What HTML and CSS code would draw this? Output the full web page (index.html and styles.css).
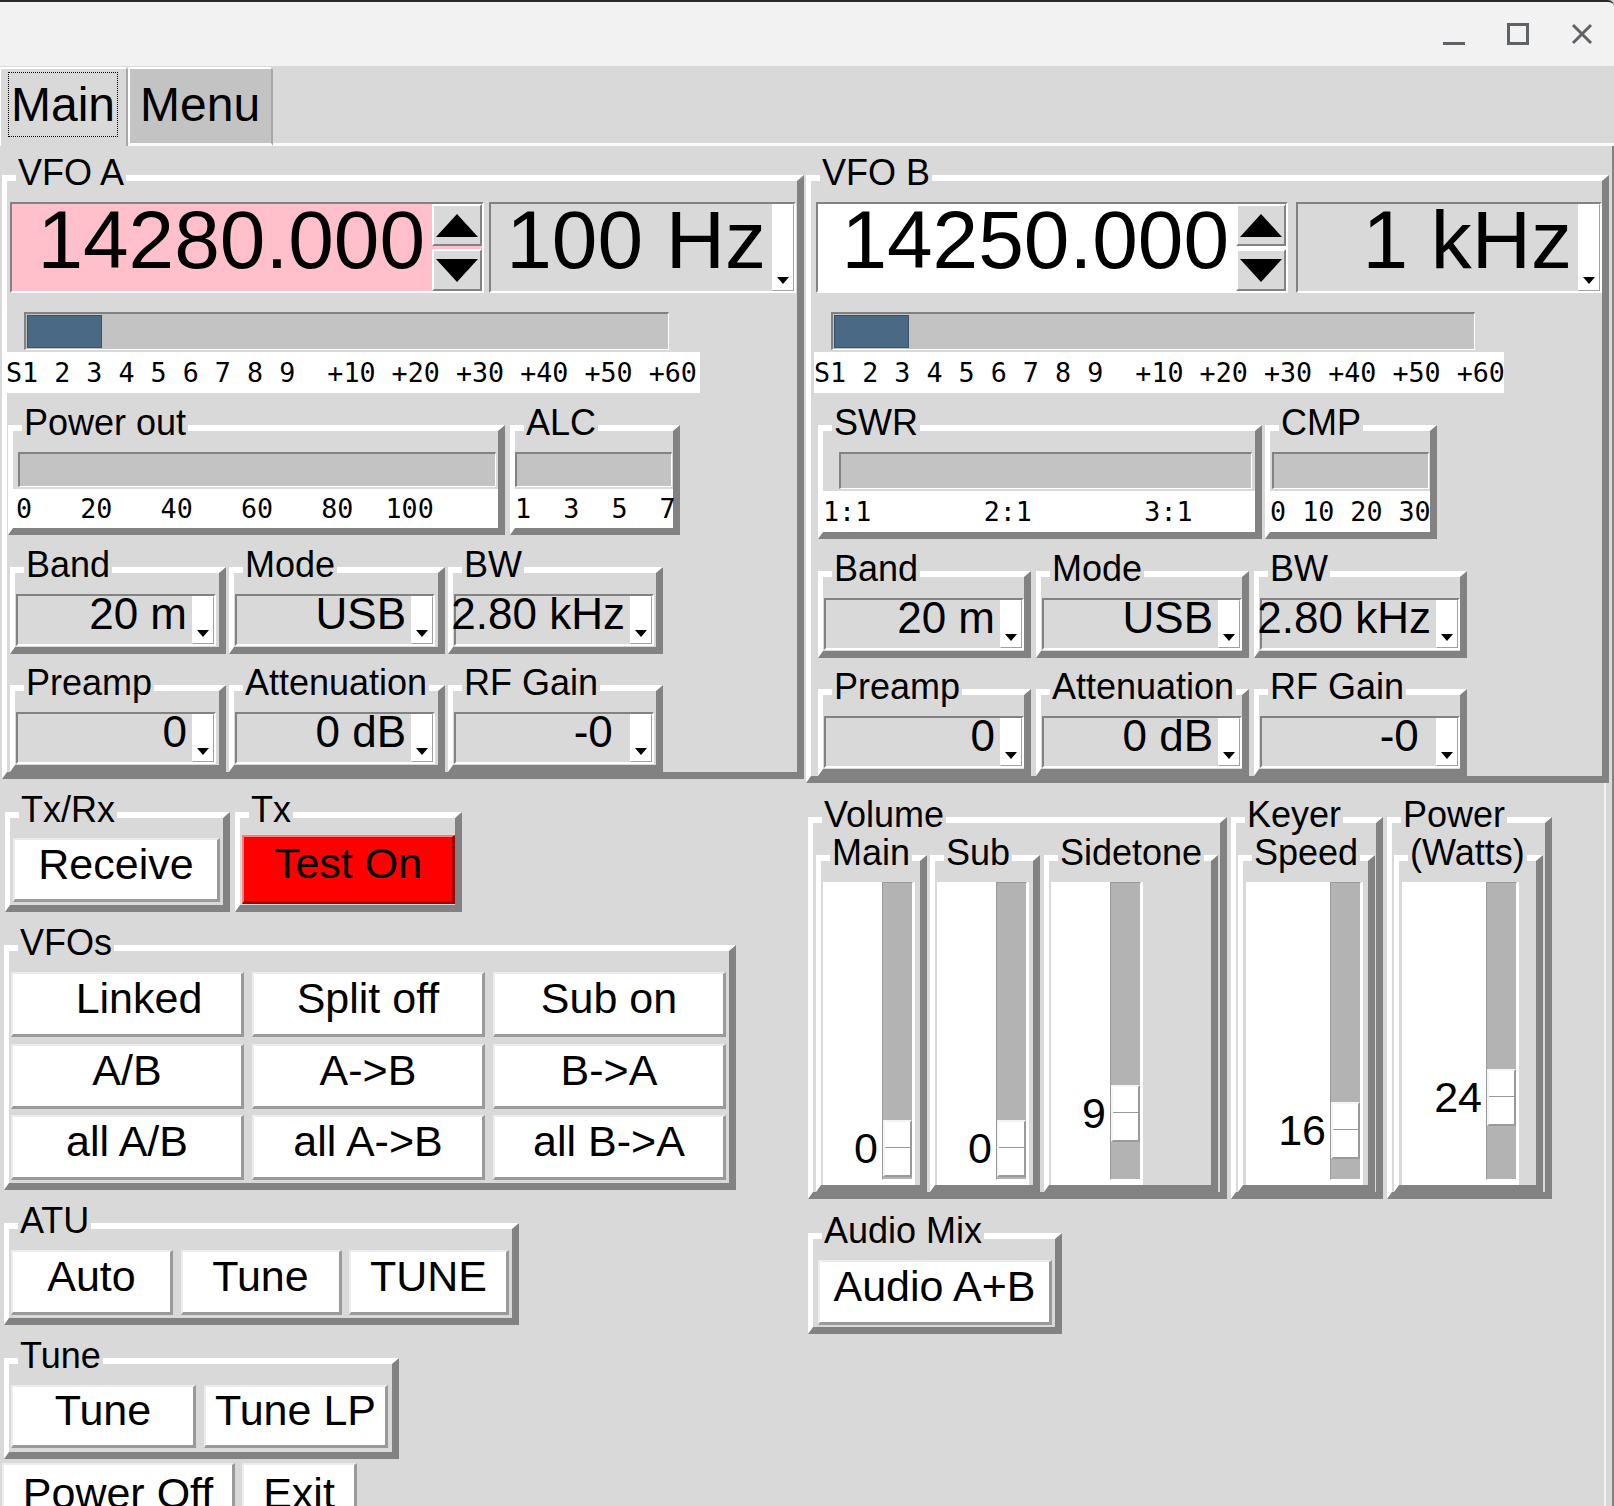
FILE: index.html
```html
<!DOCTYPE html>
<html lang="en">
<head>
<meta charset="utf-8">
<title>Rig Control</title>
<link rel="stylesheet" href="styles.css">
</head>
<body>
<div class="win">
  <header class="titlebar">
    <svg class="wm" width="22" height="22" viewBox="0 0 22 22"><rect x="0" y="19" width="22" height="3" fill="#5f6368"/></svg>
    <svg class="wm" width="22" height="22" viewBox="0 0 22 22"><rect x="1.5" y="1.5" width="19" height="19" fill="none" stroke="#5f6368" stroke-width="3"/></svg>
    <svg class="wm" width="22" height="22" viewBox="0 0 22 22"><path d="M2 2L20 20M20 2L2 20" stroke="#5f6368" stroke-width="3" fill="none"/></svg>
  </header>

  <nav class="tabs">
    <div class="tab tab-main"><span class="focus">Main</span></div>
    <div class="tab tab-menu">Menu</div>
    <div class="tab-fill"></div>
  </nav>

  <main class="pane">
    <!-- VFO A -->
    <fieldset class="lf vfo vfo-a">
      <legend>VFO A</legend>
      <div class="freqrow">
        <div class="spin spin-a"><span class="spin-val">14280.000</span><span class="spin-btns"><span class="sb sb-up"></span><span class="sb sb-dn"></span></span></div>
        <div class="combo combo-big combo-a"><span class="cval">100 Hz</span><span class="cbtn"></span></div>
      </div>
      <div class="smeter smeter-a"><div class="fill" style="width:75px"></div></div>
      <div class="ticks ticks-s ticks-sa">S1 2 3 4 5 6 7 8 9  +10 +20 +30 +40 +50 +60</div>
      <div class="mrow mrow-a">
        <fieldset class="lf lf-pwr"><legend>Power out</legend><div class="bar bar-pwr"></div><div class="ticks tk-m tk-pwr">0   20   40   60   80  100</div></fieldset>
        <fieldset class="lf lf-alc"><legend>ALC</legend><div class="bar bar-alc"></div><div class="ticks tk-m">1  3  5  7</div></fieldset>
      </div>
      <div class="crow crow-a">
        <fieldset class="lf lf-c"><legend>Band</legend><div class="combo"><span class="cval">20 m</span><span class="cbtn"></span></div></fieldset>
        <fieldset class="lf lf-c"><legend>Mode</legend><div class="combo"><span class="cval">USB</span><span class="cbtn"></span></div></fieldset>
        <fieldset class="lf lf-c"><legend>BW</legend><div class="combo"><span class="cval">2.80 kHz</span><span class="cbtn"></span></div></fieldset>
      </div>
      <div class="crow crow-a">
        <fieldset class="lf lf-c"><legend>Preamp</legend><div class="combo"><span class="cval">0</span><span class="cbtn"></span></div></fieldset>
        <fieldset class="lf lf-c"><legend>Attenuation</legend><div class="combo"><span class="cval">0 dB</span><span class="cbtn"></span></div></fieldset>
        <fieldset class="lf lf-c"><legend>RF Gain</legend><div class="combo"><span class="cval">-0 </span><span class="cbtn"></span></div></fieldset>
      </div>
    </fieldset>

    <!-- VFO B -->
    <fieldset class="lf vfo vfo-b">
      <legend>VFO B</legend>
      <div class="freqrow">
        <div class="spin spin-b"><span class="spin-val">14250.000</span><span class="spin-btns"><span class="sb sb-up"></span><span class="sb sb-dn"></span></span></div>
        <div class="combo combo-big combo-b"><span class="cval">1 kHz</span><span class="cbtn"></span></div>
      </div>
      <div class="smeter smeter-b"><div class="fill" style="width:75px"></div></div>
      <div class="ticks ticks-s ticks-sb">S1 2 3 4 5 6 7 8 9  +10 +20 +30 +40 +50 +60</div>
      <div class="mrow mrow-b">
        <fieldset class="lf lf-swr"><legend>SWR</legend><div class="bar bar-swr"></div><div class="ticks tk-mb">1:1       2:1       3:1</div></fieldset>
        <fieldset class="lf lf-cmp"><legend>CMP</legend><div class="bar bar-cmp"></div><div class="ticks tk-mb">0 10 20 30</div></fieldset>
      </div>
      <div class="crow crow-b">
        <fieldset class="lf lf-c"><legend>Band</legend><div class="combo"><span class="cval">20 m</span><span class="cbtn"></span></div></fieldset>
        <fieldset class="lf lf-c"><legend>Mode</legend><div class="combo"><span class="cval">USB</span><span class="cbtn"></span></div></fieldset>
        <fieldset class="lf lf-c"><legend>BW</legend><div class="combo"><span class="cval">2.80 kHz</span><span class="cbtn"></span></div></fieldset>
      </div>
      <div class="crow crow-b">
        <fieldset class="lf lf-c"><legend>Preamp</legend><div class="combo"><span class="cval">0</span><span class="cbtn"></span></div></fieldset>
        <fieldset class="lf lf-c"><legend>Attenuation</legend><div class="combo"><span class="cval">0 dB</span><span class="cbtn"></span></div></fieldset>
        <fieldset class="lf lf-c"><legend>RF Gain</legend><div class="combo"><span class="cval">-0 </span><span class="cbtn"></span></div></fieldset>
      </div>
    </fieldset>

    <!-- Lower left -->
    <section class="lower-left">
      <div class="txrow">
        <fieldset class="lf lf-txrx"><legend>Tx/Rx</legend><div class="btn btn-recv">Receive</div></fieldset>
        <fieldset class="lf lf-tx"><legend>Tx</legend><div class="btn btn-test">Test On</div></fieldset>
      </div>
      <fieldset class="lf lf-vfos"><legend>VFOs</legend>
        <div class="grid3">
          <div class="btn btn-linked">Linked</div>
          <div class="btn">Split off</div>
          <div class="btn">Sub on</div>
          <div class="btn">A/B</div>
          <div class="btn">A-&gt;B</div>
          <div class="btn">B-&gt;A</div>
          <div class="btn">all A/B</div>
          <div class="btn">all A-&gt;B</div>
          <div class="btn">all B-&gt;A</div>
        </div>
      </fieldset>
      <fieldset class="lf lf-atu"><legend>ATU</legend>
        <div class="grid-atu">
          <div class="btn">Auto</div>
          <div class="btn">Tune</div>
          <div class="btn">TUNE</div>
        </div>
      </fieldset>
      <fieldset class="lf lf-tune"><legend>Tune</legend>
        <div class="grid-tune">
          <div class="btn">Tune</div>
          <div class="btn">Tune LP</div>
        </div>
      </fieldset>
      <div class="botrow">
        <div class="btn btn-power">Power Off</div>
        <div class="btn btn-exit">Exit</div>
      </div>
    </section>

    <!-- Lower right -->
    <section class="lower-right">
      <div class="slrow">
        <fieldset class="lf lf-vol"><legend>Volume</legend>
          <div class="subrow">
            <fieldset class="lf lf-main"><legend>Main</legend>
              <div class="scale" style="--pos:237px"><span class="sval">0</span><span class="strough"><span class="thumb"></span></span></div>
            </fieldset>
            <fieldset class="lf lf-sub"><legend>Sub</legend>
              <div class="scale" style="--pos:237px"><span class="sval">0</span><span class="strough"><span class="thumb"></span></span></div>
            </fieldset>
            <fieldset class="lf lf-side"><legend>Sidetone</legend>
              <div class="scale" style="--pos:202px"><span class="sval">9</span><span class="strough"><span class="thumb"></span></span></div>
            </fieldset>
          </div>
        </fieldset>
        <fieldset class="lf lf-key"><legend>Keyer</legend>
          <fieldset class="lf lf-speed"><legend>Speed</legend>
            <div class="scale scale-w" style="--pos:219px"><span class="sval">16</span><span class="strough"><span class="thumb"></span></span></div>
          </fieldset>
        </fieldset>
        <fieldset class="lf lf-pw"><legend>Power</legend>
          <fieldset class="lf lf-watts"><legend>(Watts)</legend>
            <div class="scale scale-w" style="--pos:186px"><span class="sval">24</span><span class="strough"><span class="thumb"></span></span></div>
          </fieldset>
        </fieldset>
      </div>
      <fieldset class="lf lf-mix"><legend>Audio Mix</legend>
        <div class="btn btn-mix">Audio A+B</div>
      </fieldset>
    </section>
  </main>
</div>
</body>
</html>
```
FILE: styles.css
```css
* { box-sizing: border-box; }
html, body { margin: 0; padding: 0; }
body {
  width: 1614px;
  height: 1506px;
  overflow: hidden;
  background: #d9d9d9;
  font-family: "Liberation Sans", Arial, Helvetica, sans-serif;
  color: #000;
}

/* ---------- window title bar ---------- */
.titlebar {
  height: 66px;
  background: #f2f2f2;
  border-top: 2px solid #2b2b2b;
  border-top-right-radius: 6px;
  display: flex;
  justify-content: flex-end;
  align-items: center;
  gap: 42px;
  padding-right: 21px;
}
.wm { display: block; }

/* ---------- notebook tabs ---------- */
.tabs { display: flex; align-items: flex-end; height: 80px; }
.tab { font-size: 48px; line-height: 46px; white-space: nowrap; }
.tab-main {
  width: 128px;
  height: 79px;
  background: #d9d9d9;
  border-style: solid;
  border-width: 2px 2px 0 1px;
  border-color: #fff #a8a8a8 #fff #fff;
  border-top-right-radius: 4px;
  padding: 3px 0 0 7px;
}
.focus {
  display: block;
  width: 110px;
  height: 65px;
  border: 1px dotted #000;
  padding: 9px 0 0 2px;
}
.tab-menu {
  width: 145px;
  height: 79px;
  background: #c3c3c3;
  border-style: solid;
  border-width: 2px 2px 3px 2px;
  border-color: #fff #a8a8a8 #fafafa #fff;
  border-top-right-radius: 4px;
  padding: 13px 0 0 10px;
}
.tab-fill { flex: 1; border-bottom: 3px solid #fafafa; }

/* ---------- main pane ---------- */
.pane {
  display: grid;
  grid-template-columns: 802px 803px;
  column-gap: 2px;
  align-items: start;
  padding-left: 2px;
  height: 1360px;
  border-right: 2px solid #828282;
  width: 1614px;
}

/* Tk-style raised label frame */
.lf {
  margin: 0;
  padding: 0;
  min-width: 0;
  border-style: solid;
  border-width: 6px 7px 7px 5px;
  border-color: #fff #828282 #828282 #fff;
}
.lf > legend {
  font-size: 36px;
  line-height: 38px;
  padding: 0 2px 10px;
  margin-left: 9px;
  white-space: nowrap;
}

.vfo { margin-top: 8px; }
.vfo-a { width: 802px; }
.vfo-b { width: 803px; }

/* frequency row */
.freqrow { display: flex; height: 91px; }
.spin {
  display: flex;
  border: 2px solid;
  border-color: #828282 #fff #fff #828282;
}
.spin-a { margin-left: 3px; width: 474px; background: #ffc0cb; }
.spin-b { margin-left: 5px; width: 472px; background: #fff; }
.spin-val {
  flex: 1;
  display: flex;
  justify-content: flex-end;
  font-size: 82px;
  line-height: 72px;
  padding-right: 7px;
  white-space: nowrap;
}
.spin-btns {
  width: 50px;
  display: flex;
  flex-direction: column;
  gap: 3px;
}
.sb {
  flex: 1;
  background: #d9d9d9;
  border: 2px solid;
  border-color: #fff #828282 #828282 #fff;
  display: flex;
  align-items: center;
  justify-content: center;
}
.sb-up::after {
  content: "";
  border-left: 21px solid transparent;
  border-right: 21px solid transparent;
  border-bottom: 23px solid #000;
}
.sb-dn::after {
  content: "";
  border-left: 21px solid transparent;
  border-right: 21px solid transparent;
  border-top: 23px solid #000;
}

/* combobox */
.combo {
  display: flex;
  height: 52px;
  border: 2px solid;
  border-color: #828282 #fff #fff #828282;
  background: #d9d9d9;
}
.combo-big { height: 91px; }
.combo-a { margin-left: 5px; width: 307px; }
.combo-b { margin-left: 8px; width: 306px; }
.cval {
  flex: 1;
  min-width: 0;
  display: flex;
  justify-content: flex-end;
  font-size: 44px;
  line-height: 36px;
  padding-right: 5px;
  white-space: pre;
}
.combo-big .cval { font-size: 82px; line-height: 72px; padding-right: 6px; }
.cbtn {
  flex: none;
  width: 22px;
  background: #fff;
  border: 1px solid;
  border-color: #fff #a0a0a0 #a0a0a0 #fff;
  display: flex;
  align-items: flex-end;
  justify-content: center;
  padding-bottom: 6px;
}
.cbtn::after {
  content: "";
  border-left: 6px solid transparent;
  border-right: 6px solid transparent;
  border-top: 7px solid #000;
}

/* S meter */
.smeter {
  height: 38px;
  margin-top: 19px;
  background: #c3c3c3;
  border-style: solid;
  border-width: 2px 1px 1px 2px;
  border-color: #828282 #fff #fff #828282;
  padding: 1px;
}
.smeter-a { margin-left: 17px; width: 645px; }
.smeter-b { margin-left: 20px; width: 644px; }
.fill { height: 100%; background: #4a6984; border: 1px solid #38536b; }

.ticks {
  background: #fff;
  font-family: "DejaVu Sans Mono", monospace;
  font-size: 26.7px;
  white-space: pre;
}
.ticks-s { height: 41px; line-height: 41px; margin-top: 2px; width: 694px; }
.ticks-sa { margin-left: -1px; }
.ticks-sb { margin-left: 3px; width: 690px; }

/* meter frames */
.mrow { display: flex; margin-top: 11px; }
.mrow-a { margin-left: 1px; gap: 5px; }
.mrow-b { margin-left: 7px; gap: 3px; }
.lf-pwr { width: 497px; }
.lf-alc { width: 170px; }
.lf-swr { width: 444px; }
.lf-cmp { width: 172px; }
.bar {
  height: 35px;
  background: #c3c3c3;
  border-style: solid;
  border-width: 2px 1px 1px 2px;
  border-color: #828282 #fff #fff #828282;
}
.bar-pwr { margin-left: 5px; width: 478px; }
.bar-alc { width: 157px; }
.bar-swr { margin-left: 16px; width: 413px; height: 37px; }
.bar-cmp { margin-left: 2px; width: 157px; height: 37px; }
.tk-m { height: 39px; line-height: 39px; margin-top: 2px; }
.tk-pwr { padding-left: 3px; }
.tk-mb { height: 41px; line-height: 41px; margin-top: 2px; }

/* combo frames */
.crow { display: grid; margin-top: 11px; }
.crow + .crow { margin-top: 10px; }
.crow-a { grid-template-columns: 216px 216px 215px; column-gap: 3px; margin-left: 3px; }
.crow-b { grid-template-columns: 213px 213px 213px; column-gap: 5px; margin-left: 7px; }
.lf-c .combo { margin: 0 0 1px 1px; width: 200px; }

/* ---------- buttons ---------- */
.btn {
  background: #fff;
  border-style: solid;
  border-width: 2px 3px 3px 2px;
  border-color: #ececec #9a9a9a #9a9a9a #ececec;
  font-size: 43px;
  line-height: 44px;
  display: flex;
  align-items: center;
  justify-content: center;
  padding-bottom: 12px;
  white-space: nowrap;
}

/* ---------- lower left ---------- */
.lower-left { margin-top: 8px; }
.txrow { display: flex; gap: 5px; margin-left: 3px; }
.lf-txrx { width: 225px; }
.lf-tx { width: 227px; }
.btn-recv { margin: -1px 0 3px 3px; width: 207px; height: 64px; }
.btn-test {
  margin: -4px 0 1px 2px;
  width: 213px;
  height: 69px;
  background: #ff0000;
  border-color: #ff7a7a #a00000 #a00000 #ff7a7a;
}
.lf-vfos { width: 732px; margin: 12px 0 0 2px; }
.grid3 {
  display: grid;
  grid-template-columns: repeat(3, 233px);
  column-gap: 8px;
  row-gap: 6.5px;
  padding: 0 0 3px 2px;
}
.grid3 .btn { height: 65px; }
.btn-linked { padding-left: 24px; }
.lf-atu { width: 515px; margin: 12px 0 0 2px; }
.grid-atu {
  display: grid;
  grid-template-columns: 162px 161px 160px;
  column-gap: 7.5px;
  padding: 0 0 3px 2px;
}
.grid-atu .btn { height: 65px; }
.lf-tune { width: 395px; margin: 12px 0 0 2px; }
.grid-tune {
  display: grid;
  grid-template-columns: 185px 184px;
  column-gap: 8px;
  padding: 0 0 4px 2px;
}
.grid-tune .btn { height: 63px; }
.botrow { display: flex; gap: 7px; margin-top: 4px; }
.btn-power { width: 233px; height: 72px; }
.btn-exit { width: 115px; height: 72px; }

/* ---------- lower right ---------- */
.lower-right {
  align-self: stretch;
  width: 800px;
  padding-top: 13px;
  border-right: 2px solid #f2f2f2;
}
.slrow { display: flex; gap: 4px; margin-left: 2px; align-items: flex-start; }
.lf-vol { width: 419px; }
.lf-key { width: 152px; }
.lf-pw { width: 165px; }
.subrow { display: flex; margin-top: -10px; padding-left: 3px; }
.lf-main { width: 111px; }
.lf-sub { width: 110px; margin-left: 3px; }
.lf-side { width: 174px; margin-left: 4px; }
.lf-speed { width: 137px; margin: -10px 0 0 2px; }
.lf-watts { width: 149px; margin: -10px 0 0 2px; }

.scale {
  display: flex;
  width: 92px;
  height: 303px;
  margin-left: 2px;
  background: #fff;
}
.scale-w { width: 117px; margin-left: 3px; }
.sval {
  flex: 1;
  align-self: flex-start;
  text-align: right;
  padding-right: 4px;
  font-size: 43px;
  line-height: 57px;
  margin-top: calc(var(--pos) + 1px);
}
.strough {
  width: 31px;
  margin: 0 2px 5px 0;
  background: #b3b3b3;
  border: 1px solid;
  border-color: #999 #fff #fff #999;
}
.thumb {
  display: block;
  height: 57px;
  margin-top: var(--pos);
  background: #fff;
  border: 2px solid;
  border-color: #f4f4f4 #9a9a9a #9a9a9a #f4f4f4;
}
.thumb::after {
  content: "";
  display: block;
  margin-top: 25px;
  border-top: 1px solid #9a9a9a;
  border-bottom: 1px solid #fff;
}

.lf-mix { width: 254px; margin: 13px 0 0 2px; }
.btn-mix { margin: 0 0 2px 5px; width: 234px; height: 65px; }
```
